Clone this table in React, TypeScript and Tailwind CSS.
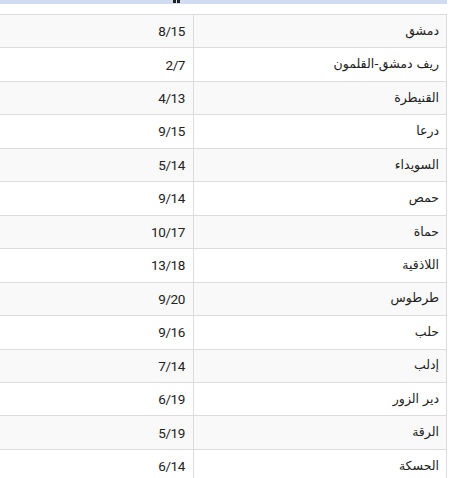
import React from "react";

const rows: [string, string][] = [
  ["دمشق", "8/15"],
  ["ريف دمشق-القلمون", "2/7"],
  ["القنيطرة", "4/13"],
  ["درعا", "9/15"],
  ["السويداء", "5/14"],
  ["حمص", "9/14"],
  ["حماة", "10/17"],
  ["اللاذقية", "13/18"],
  ["طرطوس", "9/20"],
  ["حلب", "9/16"],
  ["إدلب", "7/14"],
  ["دير الزور", "6/19"],
  ["الرقة", "5/19"],
  ["الحسكة", "6/14"],
];

export default function App() {
  return (
    <div
      className="w-[453px] h-[478px] overflow-hidden bg-white"
      style={{ fontFamily: '"DejaVu Sans", sans-serif' }}
    >
      <div className="relative h-[4px] w-[447px] bg-[#cfdcf1] overflow-hidden">
        <div className="absolute left-[173px] top-0 flex gap-[1px]">
          <div className="w-[3px] h-[3px] bg-[#222]" />
          <div className="w-[3px] h-[3px] bg-[#222]" />
        </div>
      </div>
      <div className="h-[10px]" />
      <div dir="rtl" className="w-[447px] border-t border-r border-[#dcdcdc]">
        {rows.map(([name, val], i) => (
          <div
            key={i}
            className={`flex h-[33.46px] border-b border-[#dcdcdc] ${i % 2 === 0 ? "bg-[#f9f9f9]" : "bg-white"}`}
          >
            <div className="w-[253px] shrink-0 border-l border-[#dcdcdc] pr-[7px] flex items-center text-[12.5px] text-[#222]">
              {name}
            </div>
            <div
              className="flex-1 pr-[8px] flex items-center text-[13.5px] tracking-[-0.4px] text-[#222]"
              style={{ fontFamily: "Roboto, sans-serif" }}
            >
              <span dir="ltr">{val}</span>
            </div>
          </div>
        ))}
      </div>
    </div>
  );
}
